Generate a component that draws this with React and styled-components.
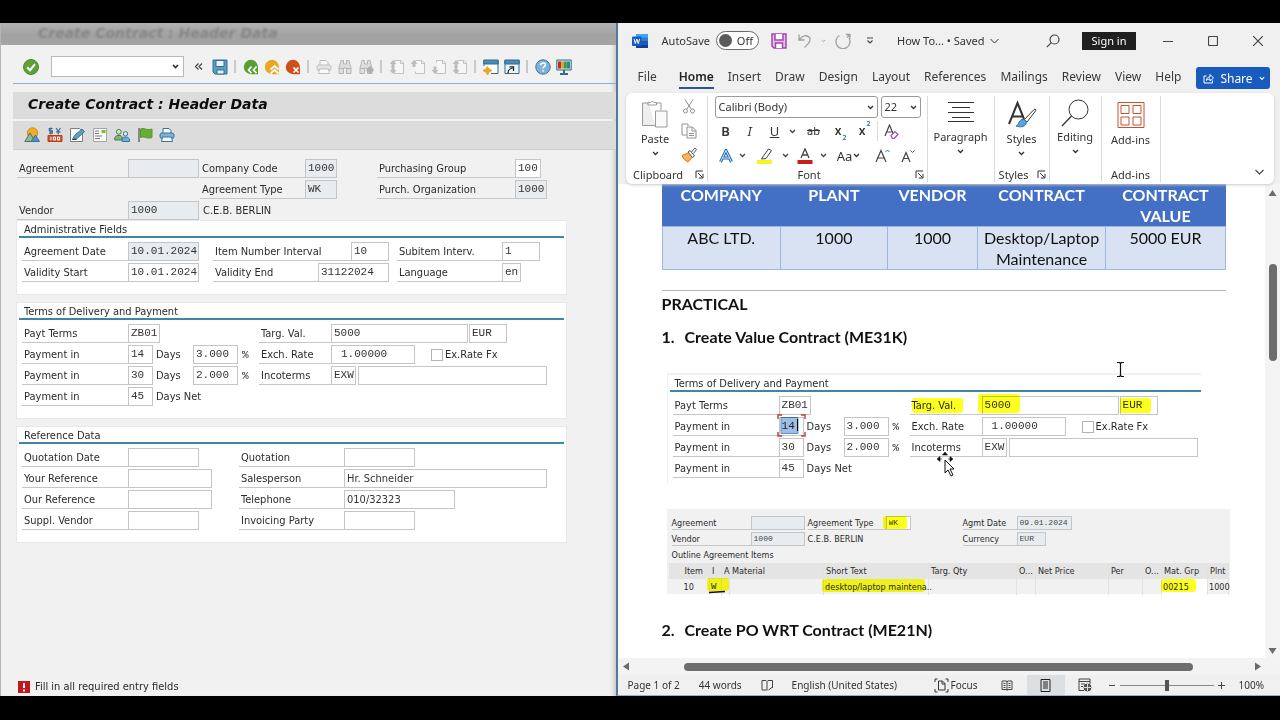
import React from "react";
import styled, { createGlobalStyle, css } from "styled-components";

const GlobalStyle = createGlobalStyle`
  * { box-sizing: border-box; }
  body { margin: 0; background: #000; }
  button, input, select { font: inherit; color: inherit; margin: 0; }
`;

const sapFont = `"DejaVu Sans Condensed", "DejaVu Sans", sans-serif`;
const sapTitleFont = `"DejaVu Sans", sans-serif`;
const monoFont = `"Liberation Mono", monospace`;
const officeFont = `"Noto Sans", "Open Sans", sans-serif`;
const docFont = `Lato, "Open Sans", sans-serif`;

const Screen = styled.div`
  min-height: 100vh;
  padding: 23px 0 24px;
  display: flex;
  background: #000;
`;

/* ---------- shared bits ---------- */

const IconButton = styled.button`
  width: ${(p) => p.$w || 21}px;
  height: ${(p) => p.$h || 21}px;
  flex: none;
  padding: 0;
  border: 0;
  background: ${(p) => p.$bg || "none"};
  display: flex;
  align-items: center;
  justify-content: center;
  color: ${(p) => p.$color || "#444"};
`;

const Svg = ({ w = 16, h, children, box }) => (
  <svg
    width={w}
    height={h || w}
    viewBox={box || `0 0 ${w} ${h || w}`}
    fill="none"
    stroke="currentColor"
    strokeWidth="1"
    aria-hidden="true"
  >
    {children}
  </svg>
);

const Chevron = ({ w = 7, stroke = 1.3 }) => (
  <Svg w={w} h={5} box="0 0 7 5">
    <path d="M1 1l2.500 2.500L6 1" strokeWidth={stroke} />
  </Svg>
);

/* ---------- SAP window ---------- */

const SapWindow = styled.section`
  flex: 616 1 0;
  min-width: 0;
  display: flex;
  flex-direction: column;
  background: #f1f1f1;
  border-left: 1px solid #b5b5b5;
  box-shadow: inset -5px 0 4px -3px #c4c4c4;
  font-family: ${sapFont};
  font-size: 11px;
  color: #2b2b2b;
`;

const GhostTitle = styled.div`
  height: 22px;
  padding-left: 37px;
  overflow: hidden;
  background: linear-gradient(#b2b2b2, #a2a2a2 55%, #a5a5a5);
  color: #868686;
  font-family: ${sapTitleFont};
  font-size: 14px;
  line-height: 21px;
  font-weight: bold;
  font-style: italic;
  > span { filter: blur(1px); }
`;

const SapToolbar = styled.div`
  height: 39px;
  margin-left: 12px;
  padding: 11px 0 0 7px;
  border-bottom: 1px solid #7db8cf;
  display: flex;
  align-items: flex-start;
`;

const Combo = styled.span`
  display: grid;
  align-items: center;
  flex: none;
  width: ${(p) => p.$w}px;
  margin: ${(p) => p.$margin || 0};
  > * { grid-area: 1 / 1; }
  > svg { justify-self: end; margin-right: 4px; pointer-events: none; }
`;

const Select = styled.select`
  appearance: none;
  width: 100%;
  height: ${(p) => p.$h || 22}px;
  padding: 0 3px 1px;
  border: 1px solid ${(p) => p.$line || "#9a9a9a"};
  border-radius: ${(p) => p.$radius || 0}px;
  background: #fff;
`;

const Sep = styled.span`
  width: 2px;
  height: 13px;
  margin: 4px 4px;
  background: #c9c9c9;
`;

const TitleStrip = styled.h1`
  margin: 8px 0 2px 12px;
  height: 27px;
  padding-left: 15px;
  background: #dcdcdc;
  color: #0c0c0c;
  font-family: ${sapTitleFont};
  font-size: 14px;
  line-height: 25px;
  font-weight: bold;
  font-style: italic;
`;

const AppToolbar = styled.div`
  margin-left: 12px;
  height: 29px;
  padding-left: 11px;
  background: #dcdcdc;
  border-bottom: 1px solid #d0d0d0;
`;

const AppTools = styled.div`
  width: 151px;
  height: 27px;
  display: flex;
  align-items: center;
  justify-content: space-between;
`;

const Form = styled.form`
  padding: 9px 16px 0;
  flex: 1;
`;

const Rows = styled.div`
  display: grid;
  gap: 2px;
`;

const Row = styled.div`
  display: flex;
  align-items: center;
  height: 19px;
`;

const Label = styled.label`
  flex: none;
  width: ${(p) => p.$w}px;
  height: 19px;
  margin-left: ${(p) => p.$gap || 0}px;
  padding-left: 2px;
  border-bottom: 1px solid #c6c6c6;
  line-height: 19px;
  white-space: nowrap;
`;

const Field = styled.input`
  flex: none;
  width: ${(p) => p.$w}px;
  height: 19px;
  margin-left: ${(p) => p.$gap || 0}px;
  padding: 0 0 1px ${(p) => (p.$indent ? 9 : 2)}px;
  border: 1px solid #c3c6c8;
  border-radius: 0;
  outline: 0;
  background: ${(p) => (p.readOnly ? "#e8ecef" : "#fff")};
  font-family: ${(p) => (p.$prose ? sapFont : monoFont)};
  font-size: 11px;
  color: #333;
`;

const Text = styled.span`
  flex: none;
  width: ${(p) => (p.$w ? `${p.$w}px` : "auto")};
  margin-left: ${(p) => p.$gap || 0}px;
  white-space: nowrap;
  font-family: ${(p) => (p.$mono ? monoFont : "inherit")};
`;

const Tick = styled.input`
  appearance: none;
  flex: none;
  width: 12px;
  height: 12px;
  margin: 0 2px 0 16px;
  border: 1px solid #b4b4b4;
  background: #fff;
`;

const Group = styled.fieldset`
  min-width: 0;
  max-width: 549px;
  margin: ${(p) => p.$top || 9}px 0 0;
  padding: 0 2px 12px;
  border: 0;
  background: #fff;
  box-shadow: 0 0 0 1px #e8e8e8;
`;

const GroupTitle = styled.h2`
  margin: 0 0 4px;
  height: 17px;
  padding-left: 5px;
  border-bottom: 2px solid #3f86a3;
  font-size: 11px;
  line-height: 17px;
  font-weight: normal;
`;

const GroupRows = styled(Rows)`
  padding-left: 3px;
`;

const SapStatus = styled.div`
  height: 19px;
  padding-left: 17px;
  display: flex;
  align-items: center;
  gap: 5px;
`;

const Entry = ({ id, label, lw, gap, w, value = "", ...rest }) => (
  <>
    <Label htmlFor={id} $w={lw} $gap={gap}>{label}</Label>
    <Field id={id} $w={w} defaultValue={value} {...rest} />
  </>
);

function TermsGroup({ prefix }) {
  return (
    <>
      <GroupTitle>Terms of Delivery and Payment</GroupTitle>
      <GroupRows>
        <Row>
          <Entry id={`${prefix}terms`} label="Payt Terms" lw={106} w={32} value="ZB01" />
          <Entry id={`${prefix}targ`} label="Targ. Val." lw={72} gap={99} w={137} value="5000" />
          <Field $w={38} $gap={1} aria-label="Currency" defaultValue="EUR" />
        </Row>
        <Row>
          <Entry id={`${prefix}p1`} label="Payment in" lw={106} w={25} value="14" />
          <Text $w={37} $gap={3}>Days</Text>
          <Field $w={45} aria-label="Discount 1" defaultValue="3.000" />
          <Text $mono $w={17} $gap={4}>%</Text>
          <Entry id={`${prefix}rate`} label="Exch. Rate" lw={72} w={84} value="1.00000" $indent />
          <Tick type="checkbox" id={`${prefix}fx`} />
          <label htmlFor={`${prefix}fx`}>Ex.Rate Fx</label>
        </Row>
        <Row>
          <Entry id={`${prefix}p2`} label="Payment in" lw={106} w={25} value="30" />
          <Text $w={37} $gap={3}>Days</Text>
          <Field $w={45} aria-label="Discount 2" defaultValue="2.000" />
          <Text $mono $w={17} $gap={4}>%</Text>
          <Entry id={`${prefix}inco`} label="Incoterms" lw={72} w={25} value="EXW" />
          <Field $w={189} $gap={2} aria-label="Incoterms place" />
        </Row>
        <Row>
          <Entry id={`${prefix}p3`} label="Payment in" lw={106} w={25} value="45" />
          <Text $gap={3}>Days Net</Text>
        </Row>
      </GroupRows>
    </>
  );
}

/* SAP icons */
const CheckIcon = () => (
  <Svg>
    <circle cx="8" cy="8" r="7.500" fill="#5ea03a" stroke="#4c8a2c" />
    <path d="M4.200 8.200l2.800 3 5-6" stroke="#fff" strokeWidth="2" />
  </Svg>
);
const SapSave = () => (
  <Svg>
    <path d="M1 1h14v14H3l-2-2z" fill="#5c9cc2" stroke="#2e6f96" />
    <path d="M4 1.500h8v6H4z" fill="#e9f3f8" stroke="#2e6f96" />
    <path d="M5 11h7v4H5z" fill="#e9f3f8" stroke="#2e6f96" />
  </Svg>
);
const NavIcon = ({ color, d }) => (
  <Svg>
    <path d="M8 .8a7.200 7.200 0 1 0 0 14.400h7V8A7.200 7.200 0 0 0 8 .8z" fill={color} stroke="none" />
    <path d={d} stroke="#fff" strokeWidth="1.700" />
  </Svg>
);
const Printer = ({ line = "#bdbdbd", fill = "#e3e3e3" }) => (
  <Svg>
    <path d="M4 6V1.500h6l2 2V6" fill="#fafafa" stroke={line} />
    <rect x="1" y="6" width="14" height="5.500" rx="2" fill={fill} stroke={line} />
    <path d="M3.500 10h9l1 4.500h-11z" fill="#fafafa" stroke={line} />
  </Svg>
);
const Binoculars = ({ plus }) => (
  <Svg>
    <path d="M4 1.500h2.500V5h3V1.500H12L14 9v5.500H9.500V9h-3v5.500H2V9z" fill="#dedede" stroke="#b5b5b5" />
    <path d="M2 9.500h4.500M9.500 9.500H14" stroke="#b5b5b5" />
    {plus && <path d="M12 7.500v7M8.500 11h7" stroke="#adadad" strokeWidth="3" />}
  </Svg>
);
const PageIcon = ({ up, down }) => (
  <Svg>
    <path d="M5.500 3.500v-2H12L14.500 4v10.500h-9v-2" fill="#f6f6f6" stroke="#c2c2c2" />
    <path d="M11.500 1.500v3h3" stroke="#c2c2c2" />
    {up && <path d="M4 1L.5 5h2v3h3V5h2z" fill="#bdbdbd" stroke="none" />}
    {down && <path d="M4 15L.5 11h2V7.500h3V11h2z" fill="#bdbdbd" stroke="none" />}
  </Svg>
);
const NewSession = () => (
  <Svg>
    <path d="M1 7V1.500h14V14.500H8" fill="#fff" stroke="#2f6b90" />
    <path d="M.8 1h14.400v4H.8z" fill="#4b8cb3" stroke="#2f6b90" />
    <path d="M4.500 7.500L6 10l3 1.500L6 13l-1.500 3L3 13 0 11.500 3 10z" fill="#e9a81f" stroke="#e9a81f" />
  </Svg>
);
const Shortcut = () => (
  <Svg>
    <path d="M1 1.500h14v13H1z" fill="#eef4f8" stroke="#2f6b90" />
    <path d="M.8 1h14.400v4H.8z" fill="#4b8cb3" stroke="#2f6b90" />
    <path d="M4 14c0-3 1-4 4.500-5M5.500 7.800h4V12" stroke="#222" strokeWidth="1.300" />
  </Svg>
);
const HelpIcon = () => (
  <Svg>
    <circle cx="8" cy="8" r="7.200" fill="#7fb2d3" stroke="#33759f" />
    <path d="M5.600 6.300c.1-3.200 5-3 4.800-.3C10.200 7.700 8 7.600 8 9.600M8 11v1.600" stroke="#fff" strokeWidth="1.600" />
  </Svg>
);
const Monitor = () => (
  <Svg>
    <path d="M.8 1h14.400v10H.8z" fill="#d5e6f0" stroke="#2f6b90" />
    <path d="M2 2.500h3.200v7H2z" fill="#c62a22" stroke="none" />
    <path d="M5.200 2.500h2.400v7H5.200z" fill="#e8a41d" stroke="none" />
    <path d="M7.600 2.500h3v7h-3z" fill="#4b9b38" stroke="none" />
    <path d="M10.600 2.500H14v7h-3.400z" fill="#2d8b86" stroke="none" />
    <path d="M8 11v3M4 15h8" stroke="#2f6b90" strokeWidth="2" />
  </Svg>
);
const Overview = () => (
  <Svg>
    <circle cx="8.500" cy="6" r="5.200" fill="#f3ac26" stroke="#d78e12" />
    <path d="M.8 14.500L6 6l5 8.500z" fill="#8fbf8e" stroke="#567" />
    <path d="M7 14.500L11.500 8l4 6.500z" fill="#4e96bf" stroke="#33759f" />
  </Svg>
);
const Conditions = () => (
  <Svg>
    <path d="M5.500 1.500H2.300v2.300h3v2.400H2M3.800.5v7M9 1l2.200 3L13.500 1M11.200 4v3.500M9 4.800h4.500" stroke="#326f96" strokeWidth="1.200" />
    <path d="M1 8.500h14v6H1z" fill="#d4532c" stroke="#b5401d" />
    <path d="M4 9.800v3.400M6.500 10h2v3h-2zM10.500 10h2v3h-2z" stroke="#fff" />
  </Svg>
);
const EditDoc = () => (
  <Svg>
    <path d="M1.500 1.500h9l3 3v10h-12z" fill="#fbfbfb" stroke="#7e7e7e" />
    <path d="M3.500 12.500l2-4L13 2l2.500 2.500L8 11.500z" fill="#5e9fc6" stroke="#33759f" />
    <path d="M3.500 12.500h4" stroke="#333" />
  </Svg>
);
const TextDoc = () => (
  <Svg>
    <path d="M1.500 1.500h13v13h-13z" fill="#fbfbfb" stroke="#a5a5a5" />
    <path d="M9.500 3h4v3h-4z" fill="#8bb92e" stroke="none" />
    <path d="M3 4h4M3 6.500h4M3 9h7M3 11.500h5" stroke="#777" />
  </Svg>
);
const Partners = () => (
  <Svg>
    <circle cx="4.800" cy="4.800" r="2.400" fill="#d7e8cf" stroke="#4c7d46" />
    <path d="M.8 13v-2.500l2-2h4l1.400 1.500v3z" fill="#86b478" stroke="#4c7d46" />
    <circle cx="11.500" cy="6.800" r="2.200" fill="#d8e8f2" stroke="#33759f" />
    <path d="M8 14.500V12l1.500-1.800h4l2 1.800v2.500z" fill="#77aacb" stroke="#33759f" />
  </Svg>
);
const FlagIcon = () => (
  <Svg>
    <path d="M2 1v14" stroke="#6d6d6d" strokeWidth="1.500" />
    <path d="M3.500 2c4-2 5 2 11.500 0v8.500c-6 2-7.500-2-11.500 0z" fill="#66ad35" stroke="#569a2a" />
  </Svg>
);

function SapPanel() {
  return (
    <SapWindow>
      <GhostTitle aria-hidden="true"><span>Create Contract : Header Data</span></GhostTitle>
      <SapToolbar>
        <IconButton aria-label="Enter"><CheckIcon /></IconButton>
        <Combo $w={133} $margin="0 4px 0 10px">
          <Select $h={21} $line="#b9b9b9" aria-label="Command"><option></option></Select>
          <Chevron w={9} stroke={1.6} />
        </Combo>
        <IconButton aria-label="Hide command field">
          <Svg w={9} h={9}><path d="M4.500 1.500l-3 3 3 3M8 1.500l-3 3 3 3" strokeWidth="1.200" /></Svg>
        </IconButton>
        <IconButton aria-label="Save"><SapSave /></IconButton>
        <Sep />
        <IconButton aria-label="Back"><NavIcon color="#55a02f" d="M8.500 7.500L5.500 11l3 3.200M13.500 7.500l-3 3.500 3 3.200" /></IconButton>
        <IconButton aria-label="Exit"><NavIcon color="#eba624" d="M6.500 10.500l4-3.500 4 3.500M6.500 14.500l4-3.500 4 3.500" /></IconButton>
        <IconButton aria-label="Cancel"><NavIcon color="#cf4f1c" d="M8.500 8.500l5 5M13.500 8.500l-5 5" /></IconButton>
        <Sep />
        <IconButton aria-label="Print"><Printer /></IconButton>
        <IconButton aria-label="Find"><Binoculars /></IconButton>
        <IconButton aria-label="Find next"><Binoculars plus /></IconButton>
        <Sep />
        <IconButton aria-label="First page"><PageIcon up down /></IconButton>
        <IconButton aria-label="Previous page"><PageIcon up /></IconButton>
        <IconButton aria-label="Next page"><PageIcon down /></IconButton>
        <IconButton aria-label="Last page"><PageIcon up down /></IconButton>
        <Sep />
        <IconButton aria-label="New session"><NewSession /></IconButton>
        <IconButton aria-label="Create shortcut"><Shortcut /></IconButton>
        <Sep />
        <IconButton aria-label="Help"><HelpIcon /></IconButton>
        <IconButton aria-label="Layout"><Monitor /></IconButton>
      </SapToolbar>
      <TitleStrip>Create Contract : Header Data</TitleStrip>
      <AppToolbar>
        <AppTools>
          <IconButton $w={16} aria-label="Overview"><Overview /></IconButton>
          <IconButton $w={16} aria-label="Conditions"><Conditions /></IconButton>
          <IconButton $w={16} aria-label="Edit"><EditDoc /></IconButton>
          <IconButton $w={16} aria-label="Texts"><TextDoc /></IconButton>
          <IconButton $w={16} aria-label="Partners"><Partners /></IconButton>
          <IconButton $w={16} aria-label="Release"><FlagIcon /></IconButton>
          <IconButton $w={16} aria-label="Print"><Printer line="#33759f" fill="#7fb2d3" /></IconButton>
        </AppTools>
      </AppToolbar>
      <Form>
        <Rows>
          <Row>
            <Entry id="agreement" label="Agreement" lw={111} w={71} readOnly />
            <Entry id="company" label="Company Code" lw={105} gap={1} w={32} value="1000" readOnly />
            <Entry id="pgroup" label="Purchasing Group" lw={138} gap={40} w={26} value="100" />
          </Row>
          <Row>
            <Entry id="atype" label="Agreement Type" lw={105} gap={183} w={32} value="WK" readOnly />
            <Entry id="porg" label="Purch. Organization" lw={138} gap={40} w={32} value="1000" readOnly />
          </Row>
          <Row>
            <Entry id="vendor" label="Vendor" lw={111} w={71} value="1000" readOnly />
            <Text $gap={4}>C.E.B. BERLIN</Text>
          </Row>
        </Rows>
        <Group $top={1}>
          <GroupTitle>Administrative Fields</GroupTitle>
          <GroupRows>
            <Row>
              <Entry id="adate" label="Agreement Date" lw={106} w={71} value="10.01.2024" readOnly />
              <Entry id="interval" label="Item Number Interval" lw={138} gap={14} w={38} value="10" />
              <Entry id="subitem" label="Subitem Interv." lw={105} gap={8} w={38} value="1" />
            </Row>
            <Row>
              <Entry id="vstart" label="Validity Start" lw={106} w={71} value="10.01.2024" />
              <Entry id="vend" label="Validity End" lw={105} gap={14} w={71} value="31122024" />
              <Entry id="lang" label="Language" lw={105} gap={8} w={19} value="en" />
            </Row>
          </GroupRows>
        </Group>
        <Group>
          <TermsGroup prefix="t-" />
        </Group>
        <Group>
          <GroupTitle>Reference Data</GroupTitle>
          <GroupRows>
            <Row>
              <Entry id="qdate" label="Quotation Date" lw={106} w={71} />
              <Entry id="quot" label="Quotation" lw={105} gap={40} w={71} />
            </Row>
            <Row>
              <Entry id="yref" label="Your Reference" lw={106} w={84} />
              <Entry id="sales" label="Salesperson" lw={105} gap={27} w={203} value="Hr. Schneider" $prose />
            </Row>
            <Row>
              <Entry id="oref" label="Our Reference" lw={106} w={84} />
              <Entry id="tel" label="Telephone" lw={105} gap={27} w={111} value="010/32323" $prose />
            </Row>
            <Row>
              <Entry id="supp" label="Suppl. Vendor" lw={106} w={71} />
              <Entry id="inv" label="Invoicing Party" lw={105} gap={40} w={71} />
            </Row>
          </GroupRows>
        </Group>
      </Form>
      <SapStatus>
        <Svg w={12}>
          <rect x="0" y="0" width="12" height="12" fill="#c5161d" stroke="none" />
          <path d="M6 2v5M6 8.500v2" stroke="#fff" strokeWidth="2" />
        </Svg>
        Fill in all required entry fields
      </SapStatus>
    </SapWindow>
  );
}

/* ---------- Word window ---------- */

const WordWindow = styled.section`
  flex: 664 1 0;
  min-width: 0;
  display: flex;
  flex-direction: column;
  background: #f0f0f0;
  border-left: 2px solid #54799d;
  border-bottom: 1px solid #8fb4cc;
  font-family: ${officeFont};
  font-size: 11px;
  color: #333;
`;

const TitleBar = styled.header`
  height: 35px;
  padding-left: 14px;
  display: flex;
  align-items: center;
`;

const Toggle = styled.button`
  width: 43px;
  height: 19px;
  margin: 0 9px 0 6px;
  padding: 0 5px 0 2px;
  flex: none;
  display: flex;
  align-items: center;
  justify-content: space-between;
  border: 1px solid #6c6c6c;
  border-radius: 10px;
  background: #fff;
  line-height: 16px;
  &::before {
    content: "";
    width: 13px;
    height: 13px;
    border-radius: 50%;
    background: #5b5b5b;
  }
`;

const Name = styled.span`
  white-space: nowrap;
  margin-left: ${(p) => p.$gap || 0}px;
  margin-right: ${(p) => p.$after || 0}px;
`;

const SignIn = styled.button`
  width: 54px;
  height: 18px;
  margin: 0 10px 0 19px;
  padding: 0;
  border: 0;
  background: #1f1f1f;
  color: #fff;
  line-height: 16px;
`;

const Stretch = styled.span`
  flex: 1;
`;

const Tabs = styled.nav`
  height: 35px;
  padding: 5px 10px 0 20px;
  display: flex;
  align-items: center;
  gap: 14px;
  font-size: 12px;
`;

const Tab = styled.a`
  height: 22px;
  line-height: 20px;
  color: #3a3a3a;
  text-decoration: none;
  white-space: nowrap;
  border-bottom: 2px solid transparent;
  ${(p) => p.$first && css`margin-right: 8px;`}
  ${(p) =>
    p.$on &&
    css`
      font-weight: 600;
      color: #222;
      border-color: #2b579a;
    `}
`;

const Share = styled.button`
  width: 74px;
  height: 22px;
  margin-left: auto;
  flex: none;
  padding: 0 5px 0 7px;
  border: 0;
  border-radius: 3px;
  background: #185abd;
  color: #fff;
  display: flex;
  align-items: center;
  justify-content: space-between;
`;

const Ribbon = styled.div`
  height: 91px;
  margin: 0 6px 0 8px;
  display: flex;
  background: #fff;
  border-radius: 6px;
  box-shadow: 0 1px 3px #c8c8c8;
  z-index: 1;
`;

const RGroup = styled.div`
  width: ${(p) => p.$w}px;
  margin: 3px 0 2px;
  flex: none;
  border-right: 1px solid #dadada;
  display: flex;
  flex-direction: column;
`;

const RBody = styled.div`
  flex: 1;
  padding-left: ${(p) => p.$shift || 0}px;
  display: flex;
  justify-content: center;
`;

const RFoot = styled.div`
  height: 15px;
  display: flex;
  align-items: center;
  line-height: 15px;
  white-space: nowrap;
  > span { flex: 1; text-align: center; }
  > svg { margin: 0 3px 0 4px; }
`;

const Big = styled.button`
  padding: 0;
  border: 0;
  background: none;
  display: flex;
  flex-direction: column;
  align-items: center;
  line-height: 16px;
  > svg:first-child { margin: 3px 0 2px; }
  > svg:last-child { margin-top: 4px; }
`;

const ClipColumn = styled.div`
  display: flex;
  flex-direction: column;
  margin-left: 9px;
  gap: 3px;
`;

const FontBody = styled.div`
  flex: 1;
  padding: 0 7px;
`;

const FontRow = styled.div`
  display: flex;
  align-items: center;
  height: ${(p) => p.$h || 24}px;
`;

const Glyph = styled.button`
  width: ${(p) => p.$w || 28}px;
  height: 22px;
  flex: none;
  padding: 0;
  border: 0;
  background: none;
  font-size: ${(p) => p.$size || 13}px;
  line-height: 20px;
  font-weight: ${(p) => (p.$bold ? 600 : 400)};
  font-style: ${(p) => (p.$italic ? "italic" : "normal")};
  text-decoration: ${(p) => p.$line || "none"};
  display: flex;
  align-items: center;
  justify-content: center;
  gap: 1px;
  sub, sup { font-size: 7px; color: #2b6fb3; line-height: 8px; }
  sub { align-self: flex-end; }
  sup { align-self: flex-start; }
`;

const Divider = styled.span`
  width: 1px;
  height: 20px;
  margin-left: ${(p) => p.$gap || 0}px;
  background: #dadada;
`;

const Collapse = styled(IconButton)`
  margin: auto 4px 2px auto;
`;

const Work = styled.div`
  flex: 1;
  display: flex;
`;

const Page = styled.article`
  flex: 1;
  min-width: 0;
  position: relative;
  padding: 0 39px 0 44px;
  background: #fff;
  color: #111;
  font-family: ${docFont};
`;

const ContractTable = styled.table`
  width: 100%;
  border-collapse: collapse;
  table-layout: fixed;
  font-size: 16px;
  line-height: 21px;
  text-align: center;
  th {
    padding: 0;
    height: 42px;
    background: #4370c4;
    color: #fff;
    font-weight: 700;
    vertical-align: top;
  }
  td {
    padding: 0;
    height: 43px;
    background: #d9e2f3;
    border: 1px solid #9db7e0;
    vertical-align: top;
  }
`;

const Rule = styled.hr`
  height: 1px;
  margin: 20px 0 2px;
  border: 0;
  background: #b4b4b4;
`;

const Heading = styled.h2`
  margin: 0;
  height: 33px;
  font-size: 16px;
  line-height: 22px;
  font-weight: 700;
`;

const Steps = styled.ol`
  list-style: none;
  margin: 0;
  padding: 0;
`;

const StepTitle = styled.h3`
  margin: 0;
  padding-top: ${(p) => p.$top || 0}px;
  display: flex;
  font-size: 16px;
  line-height: 22px;
  font-weight: 700;
  &::before {
    content: "${(p) => p.$n}.";
    width: 23px;
  }
`;

const Shot = styled.figure`
  position: relative;
  margin: 25px -4px 0 5px;
  font-family: ${sapFont};
  color: #2b2b2b;
`;

const TermsShot = styled(Shot)`
  margin-right: 25px;
  height: 110px;
  border-top: 2px solid #f1f1f1;
  border-left: 1px solid #f0f0f0;
  font-size: 11px;
  padding-left: 2px;
`;

const ItemsShot = styled(Shot)`
  margin-top: 26px;
  height: 85px;
  padding: 6px 0 0 5px;
  background: #f1f1f1;
  font-size: 9px;
`;

/* felt-pen strokes over the pasted screens */
const Marker = styled.span`
  position: absolute;
  left: ${(p) => p.$x}px;
  top: ${(p) => p.$y}px;
  width: ${(p) => p.$w}px;
  height: ${(p) => p.$h}px;
  border-radius: 3px;
  background: #fdff1f;
  mix-blend-mode: multiply;
`;

/* selected text and the red corners of the active field */
const Focused = styled.span`
  position: absolute;
  left: 109px;
  top: 39px;
  line-height: 0;
  mix-blend-mode: multiply;
`;

const SmallRow = styled.div`
  display: flex;
  height: 16px;
  align-items: center;
`;

const SmallLabel = styled(Label)`
  height: 14px;
  line-height: 14px;
  padding-left: 0;
`;

const SmallField = styled(Field)`
  height: 14px;
  font-size: 8px;
  color: #444;
`;

const ItemsTable = styled.table`
  width: 560px;
  margin-left: -3px;
  border-collapse: collapse;
  table-layout: fixed;
  line-height: 13px;
  th, td {
    height: 16px;
    padding: 0 0 0 2px;
    font-weight: normal;
    text-align: left;
    white-space: nowrap;
    border-right: 1px solid #e2e2e2;
  }
  th { background: #e4e4e4; }
`;

const Pointer = styled.span`
  position: absolute;
  left: ${(p) => p.$x}px;
  top: ${(p) => p.$y}px;
  color: #111;
  line-height: 0;
`;

const VScroll = styled.div`
  width: 15px;
  background: #f4f4f4;
  display: flex;
  flex-direction: column;
  align-items: center;
  padding: 5px 0 3px;
  color: #6b6b6b;
`;

const VThumb = styled.div`
  width: 8px;
  height: 97px;
  margin: 66px 0 auto;
  border-radius: 4px;
  background: #6d6d6d;
`;

const HScroll = styled.div`
  height: 17px;
  padding: 0 18px 0 4px;
  display: flex;
  align-items: center;
  color: #6b6b6b;
  background: #f3f3f3;
`;

const HThumb = styled.div`
  flex: 1;
  height: 8px;
  margin: 0 60px 0 53px;
  border-radius: 4px;
  background: #6d6d6d;
`;

const StatusBar = styled.footer`
  height: 20px;
  padding: 0 16px 0 10px;
  display: flex;
  align-items: center;
  font-size: 10px;
  white-space: nowrap;
`;

const Zoom = styled.input`
  appearance: none;
  width: 94px;
  height: 12px;
  background: linear-gradient(#888, #888) center / 100% 1px no-repeat;
  &::-webkit-slider-thumb {
    appearance: none;
    width: 4px;
    height: 11px;
    background: #555;
  }
`;

const Arrow = ({ d }) => (
  <Svg w={9} h={9}><path d={d} fill="currentColor" stroke="none" /></Svg>
);

const Launcher = () => (
  <Svg w={9}>
    <path d="M1 8V1h7M3 3l4.500 4.500M8 3.800V8H3.800" />
  </Svg>
);

const tabs = ["File", "Home", "Insert", "Draw", "Design", "Layout", "References", "Mailings", "Review", "View", "Help"];

function WordTitle() {
  return (
    <TitleBar>
      <Svg w={16}>
        <path d="M4 1h12v14H4z" fill="#41a5ee" stroke="none" />
        <path d="M4 4.500h12v3.500H4z" fill="#2b7cd3" stroke="none" />
        <path d="M4 8h12v3.500H4z" fill="#185abd" stroke="none" />
        <path d="M4 11.500h12V15H4z" fill="#103f91" stroke="none" />
        <rect x="0" y="3.500" width="9.500" height="9.500" rx="1" fill="#185abd" stroke="none" />
        <path d="M2 5.800l1.300 4.800 1.500-4.600 1.500 4.600 1.300-4.800" stroke="#fff" />
      </Svg>
      <Name $gap={14}>AutoSave</Name>
      <Toggle aria-label="AutoSave">Off</Toggle>
      <IconButton $color="#a348ad" aria-label="Save">
        <Svg>
          <path d="M1 1h14v14H3l-2-2z" fill="#e3bfe8" strokeWidth="1.500" />
          <path d="M4 1v6h8V1M4.500 15v-5h7v5" fill="#fff" strokeWidth="1.500" />
        </Svg>
      </IconButton>
      <IconButton $w={32} $color="#a0a0a0" aria-label="Undo">
        <Svg><path d="M2 1.500v5.500h5.500M2.300 6.800C5 2.500 10 1.500 12.500 4.500c2.300 3-1 6-5 10" strokeWidth="1.300" /></Svg>
      </IconButton>
      <Svg w={5} h={4} box="0 0 7 5"><path d="M1 1l2.500 2.500L6 1" stroke="#a0a0a0" strokeWidth="1.300" /></Svg>
      <IconButton $w={34} $color="#a0a0a0" aria-label="Redo">
        <Svg><path d="M11 1.500h4v4M14.500 2L12 4.500M4.500 2.500A7 7 0 1 0 14 5" strokeWidth="1.300" /></Svg>
      </IconButton>
      <IconButton $w={20} aria-label="Customize">
        <Svg w={8} h={7}><path d="M1 1h6M1.500 3.500L4 6l2.500-2.500" strokeWidth="1.200" /></Svg>
      </IconButton>
      <Name $gap={17} $after={5}>How To... • Saved</Name>
      <Svg w={9} h={6}><path d="M.5 1l4 4 4-4" /></Svg>
      <Stretch />
      <IconButton aria-label="Search">
        <Svg w={14}><circle cx="8.500" cy="5.500" r="4.500" strokeWidth="1.200" /><path d="M5.300 8.700L.8 13.200" strokeWidth="1.200" /></Svg>
      </IconButton>
      <SignIn>Sign in</SignIn>
      <IconButton $w={44} aria-label="Minimize"><Svg w={10}><path d="M0 5.500h10" /></Svg></IconButton>
      <IconButton $w={46} aria-label="Maximize"><Svg w={10}><rect x=".5" y=".5" width="9" height="9" rx="1" strokeWidth="1.200" /></Svg></IconButton>
      <IconButton $w={44} aria-label="Close"><Svg w={10}><path d="M0 0l10 10M10 0L0 10" strokeWidth="1.200" /></Svg></IconButton>
    </TitleBar>
  );
}

function WordRibbon() {
  return (
    <Ribbon>
      <RGroup $w={82}>
        <RBody $shift={8}>
          <Big>
            <Svg w={28} h={30}>
              <path d="M8 4H1.500v22.500H14" fill="#eee" stroke="#9a9a9a" />
              <path d="M20 11V4h-6" stroke="#9a9a9a" />
              <path d="M7 6V3.500h2.500a2 2 0 0 1 3.500 0h2.500V6z" fill="#fff" stroke="#9a9a9a" />
              <path d="M14.500 12h11.500v16H14.500z" fill="#fafafa" stroke="#9a9a9a" />
            </Svg>
            Paste
            <Chevron />
          </Big>
          <ClipColumn>
            <IconButton aria-label="Cut" $color="#909090">
              <Svg w={12} h={15}><path d="M2 .5l6.500 10M10 .5L3.500 10.500" /><circle cx="2.500" cy="12" r="2" /><circle cx="9.500" cy="12" r="2" /></Svg>
            </IconButton>
            <IconButton aria-label="Copy" $color="#909090">
              <Svg w={16}><path d="M5.500 12H1V1h6v2M6 4h5.500L15 7.500V15H6zM11 4v4h4M8 10.500h5M8 12.500h5" /></Svg>
            </IconButton>
            <IconButton aria-label="Format painter">
              <Svg>
                <path d="M1 8.500l7-3 3.500 4.500-4.500 5C4 13.500 2 11.500 1 8.500z" fill="#f6b55c" stroke="#d57f26" />
                <path d="M7 5l2-1.500L13.500 9l-2 1.500z" fill="#fff" stroke="#555" />
                <path d="M10.500 5L14 1l1.500 1.500-3 4" fill="#fff" stroke="#555" />
              </Svg>
            </IconButton>
          </ClipColumn>
        </RBody>
        <RFoot><span>Clipboard</span><Launcher /></RFoot>
      </RGroup>
      <RGroup $w={220}>
        <FontBody>
          <FontRow $h={22}>
            <Combo $w={163} $margin="0 3px 0 0">
              <Select aria-label="Font" $radius={3}><option>Calibri (Body)</option></Select>
              <Chevron />
            </Combo>
            <Combo $w={40}>
              <Select aria-label="Font size" $radius={3}><option>22</option></Select>
              <Chevron />
            </Combo>
          </FontRow>
          <FontRow $h={26}>
            <Glyph $w={22} $bold aria-label="Bold">B</Glyph>
            <Glyph $w={26} $italic aria-label="Italic">I</Glyph>
            <Glyph $w={24} $line="underline" aria-label="Underline">U</Glyph>
            <IconButton $w={12} aria-label="Underline style"><Chevron /></IconButton>
            <Glyph $w={30} $size={11} $line="line-through" aria-label="Strikethrough">ab</Glyph>
            <Glyph $w={24} $size={12} $bold aria-label="Subscript">x<sub>2</sub></Glyph>
            <Glyph $w={24} $size={12} $bold aria-label="Superscript">x<sup>2</sup></Glyph>
            <Divider />
            <IconButton $w={28} aria-label="Clear formatting">
              <Svg w={15} h={15}>
                <path d="M1 12L5.500 1 9 9.500M2.500 8h5" strokeWidth="1.200" />
                <path d="M7 11.500l4-4 3 3-4 4H8.500z" fill="#fff" stroke="#a348ad" strokeWidth="1.200" />
              </Svg>
            </IconButton>
          </FontRow>
          <FontRow $h={23}>
            <IconButton $w={22} aria-label="Text effects">
              <Svg w={14}><path d="M1.500 13L7 1.500 12.500 13M3.800 9h6.400" stroke="#2b6fb3" strokeWidth="3" /><path d="M1.500 13L7 1.500 12.500 13M3.800 9h6.400" stroke="#cfe3f5" /></Svg>
            </IconButton>
            <IconButton $w={12} aria-label="Effects menu"><Chevron /></IconButton>
            <IconButton $w={32} aria-label="Highlight">
              <Svg w={16}>
                <path d="M5 10L11.500 1l3 1.500L9 10.500 4.500 11z" />
                <path d="M0 12h15v4H0z" fill="#f6f61e" stroke="none" />
              </Svg>
            </IconButton>
            <IconButton $w={10} aria-label="Highlight colour"><Chevron /></IconButton>
            <IconButton $w={28} aria-label="Font colour">
              <Svg w={16}>
                <path d="M4 10L8 .8 12 10M5.500 7h5" strokeWidth="1.300" />
                <path d="M.5 12h15v4H.5z" fill="#c81e1e" stroke="none" />
              </Svg>
            </IconButton>
            <IconButton $w={10} aria-label="Font colour menu"><Chevron /></IconButton>
            <Glyph $w={40} aria-label="Change case">Aa<Chevron /></Glyph>
            <Divider $gap={1} />
            <IconButton $w={26} aria-label="Grow font">
              <Svg w={16}><path d="M1 14L6 2.500 11 14M2.800 10h6.400" strokeWidth="1.200" /><path d="M10.500 4l2-2 2 2" stroke="#2b6fb3" /></Svg>
            </IconButton>
            <IconButton $w={24} aria-label="Shrink font">
              <Svg w={16}><path d="M2 14L6 4.500 10 14M3.500 10.500h5" strokeWidth="1.200" /><path d="M10.500 2.500l2 2 2-2" stroke="#2b6fb3" /></Svg>
            </IconButton>
          </FontRow>
        </FontBody>
        <RFoot><span>Font</span><Launcher /></RFoot>
      </RGroup>
      <RGroup $w={67}>
        <RBody>
          <Big>
            <Svg w={28} h={28}><path d="M1 3.500h26M5 8.500h18M1 13.500h26M5 18.500h18M1 22.500h26" strokeWidth="1.200" /></Svg>
            Paragraph
            <Chevron />
          </Big>
        </RBody>
      </RGroup>
      <RGroup $w={55}>
        <RBody>
          <Big>
            <Svg w={30} h={30}>
              <path d="M2 25L10.500 4 17 20M5 17.500h11" strokeWidth="2" />
              <path d="M17 21L27 10.500c1.500-1 2.500.5 1.500 1.500L20 23z" fill="#fff" />
              <path d="M9 27c3-.5 2-5 6-6.500 3-.5 5 2 4 4.500-1.500 3-6 3.500-10 2z" fill="#5ba5dc" stroke="#2b6fb3" />
            </Svg>
            Styles
            <Chevron />
          </Big>
        </RBody>
        <RFoot><span>Styles</span><Launcher /></RFoot>
      </RGroup>
      <RGroup $w={52}>
        <RBody>
          <Big>
            <Svg w={28} h={28}><circle cx="17.500" cy="10.500" r="9.500" /><path d="M10.500 17L1 27" strokeWidth="1.300" /></Svg>
            Editing
            <Chevron />
          </Big>
        </RBody>
      </RGroup>
      <RGroup $w={59}>
        <RBody>
          <Big>
            <Svg w={28} h={30}>
              <g stroke="#c8502d">
                <path d="M1 2.500h26v25H1z" />
                <path d="M4 5.500h8v8H4zM16 5.500h8v8h-8zM4 17h8v8H4zM16 17h8v8h-8z" />
              </g>
            </Svg>
            Add-ins
          </Big>
        </RBody>
        <RFoot><span>Add-ins</span></RFoot>
      </RGroup>
      <Collapse aria-label="Collapse ribbon"><Svg w={9} h={6}><path d="M.5 1l4 4 4-4" strokeWidth="1.200" /></Svg></Collapse>
    </Ribbon>
  );
}

const itemCols = [41, 12, 8, 94, 105, 88, 19, 73, 34, 19, 46, 21];
const itemHeads = ["Item", "I", "A", "Material", "Short Text", "Targ. Qty", "O...", "Net Price", "Per", "O...", "Mat. Grp", "Plnt"];
const itemCells = ["10", "W", "", "", "desktop/laptop maintena..", "", "", "", "", "", "00215", "1000"];

const ItemHead = styled.th`
  && { padding-left: ${(p) => (p.$first ? 16 : 2)}px; }
`;
const ItemCell = styled.td`
  && {
    padding-left: ${(p) => (p.$first ? 15 : 1)}px;
    background: ${(p) => (p.$white ? "#fff" : "none")};
    font-family: ${(p) => (p.$mono ? monoFont : "inherit")};
  }
`;

function WordDocument() {
  return (
    <Page>
      <ContractTable>
        <colgroup>
          <col style={{ width: "21%" }} />
          <col style={{ width: "19%" }} />
          <col style={{ width: "16%" }} />
          <col />
          <col style={{ width: "21.3%" }} />
        </colgroup>
        <thead>
          <tr><th>COMPANY</th><th>PLANT</th><th>VENDOR</th><th>CONTRACT</th><th>CONTRACT<br />VALUE</th></tr>
        </thead>
        <tbody>
          <tr><td>ABC LTD.</td><td>1000</td><td>1000</td><td>Desktop/Laptop<br />Maintenance</td><td>5000 EUR</td></tr>
        </tbody>
      </ContractTable>
      <Rule />
      <Heading>PRACTICAL</Heading>
      <Steps>
        <li>
          <StepTitle $n={1}>Create Value Contract (ME31K)</StepTitle>
          <TermsShot>
            <TermsGroup prefix="w-" />
            <Marker $x={244} $y={23} $w={51} $h={15} />
            <Marker $x={310} $y={19} $w={42} $h={19} />
            <Marker $x={452} $y={23} $w={31} $h={15} />
            <Focused>
              <Svg w={29} h={23}>
                <path d="M4 3.500h17v16H4z" fill="#9dbfe4" stroke="#5b93c4" />
                <path d="M20.500 5v12" stroke="#000" />
                <path d="M1 5V1h4M24 1h4v4M28 18v4h-4M5 22H1v-4" stroke="#d0443c" strokeWidth="1.500" />
              </Svg>
            </Focused>
          </TermsShot>
          <ItemsShot>
            <SmallRow>
              <SmallLabel htmlFor="s-agr" $w={79}>Agreement</SmallLabel>
              <SmallField id="s-agr" $w={54} readOnly />
              <SmallLabel htmlFor="s-type" $w={78} $gap={3}>Agreement Type</SmallLabel>
              <SmallField id="s-type" $w={25} defaultValue="WK" />
              <SmallLabel htmlFor="s-date" $w={54} $gap={52}>Agmt Date</SmallLabel>
              <SmallField id="s-date" $w={55} defaultValue="09.01.2024" readOnly />
            </SmallRow>
            <SmallRow>
              <SmallLabel htmlFor="s-vend" $w={79}>Vendor</SmallLabel>
              <SmallField id="s-vend" $w={54} defaultValue="1000" readOnly />
              <Text $gap={3} $w={155}>C.E.B. BERLIN</Text>
              <SmallLabel htmlFor="s-cur" $w={54}>Currency</SmallLabel>
              <SmallField id="s-cur" $w={29} defaultValue="EUR" readOnly />
            </SmallRow>
            <SmallRow>Outline Agreement Items</SmallRow>
            <ItemsTable>
              <colgroup>{itemCols.map((w, i) => <col key={i} style={{ width: w }} />)}</colgroup>
              <thead>
                <tr>{itemHeads.map((h, i) => <ItemHead key={i} $first={i === 0}>{h}</ItemHead>)}</tr>
              </thead>
              <tbody>
                <tr>
                  {itemCells.map((c, i) => (
                    <ItemCell key={i} $first={i === 0} $mono={i === 1} $white={i === 10}>{c}</ItemCell>
                  ))}
                </tr>
              </tbody>
            </ItemsTable>
            <Marker $x={216} $y={7} $w={24} $h={13} />
            <Marker $x={40} $y={69} $w={22} $h={13} />
            <Marker $x={155} $y={70} $w={103} $h={13} />
            <Marker $x={494} $y={70} $w={35} $h={13} />
            <Pointer $x={41} $y={81}><Svg w={18} h={4}><path d="M1 2.500L17 1.500" strokeWidth="1.600" /></Svg></Pointer>
          </ItemsShot>
        </li>
        <li>
          <StepTitle $n={2} $top={25}>Create PO WRT Contract (ME21N)</StepTitle>
        </li>
      </Steps>
      <Pointer $x={498} $y={178}>
        <Svg w={9} h={15}><path d="M1 .5h2.500l1 1 1-1H8M4.500 1.500v12M1 14.500h2.500l1-1 1 1H8" strokeWidth="1.200" /></Svg>
      </Pointer>
      <Pointer $x={319} $y={268}>
        <Svg w={18} h={26}>
          <path d="M8 0l2.500 3h-5zM0 7l3-2.500v5zM16 7l-3-2.500v5zM3 7h2M11 7h2" fill="#111" strokeWidth=".6" />
          <path d="M8 8v13l3-3 3 6 2-1-3-6h4z" fill="#fff" stroke="#111" />
        </Svg>
      </Pointer>
    </Page>
  );
}

function WordStatus() {
  return (
    <StatusBar>
      <span>Page 1 of 2</span>
      <Name $gap={19}>44 words</Name>
      <IconButton $w={50} $h={20} aria-label="Proofing">
        <Svg w={12}><path d="M1 1.500h4l1 1 1-1h4.500V9M1 1.500V11h4.500M6 2.500V11.500M7.500 11l4-3" /></Svg>
      </IconButton>
      <span>English (United States)</span>
      <Stretch />
      <Svg w={15}><path d="M3.500 1H1v3M1 11v3h2.500M11.500 1H14v3M14 11v3h-2.500M4.500 3h4l2.500 2.500V12H4.500zM8 3v3h3" /></Svg>
      <Name $gap={2} $after={9}>Focus</Name>
      <IconButton $w={40} $h={20} aria-label="Read mode">
        <Svg w={12}><path d="M1 2h4.500l.5 1 .5-1H11v8.500H6.500l-.5 1-.5-1H1zM6 3v8M2.500 4.500H4.500M2.500 6.500H4.500M2.500 8.500H4.500M7.500 4.500H9.500M7.500 6.500H9.500M7.500 8.500H9.500" /></Svg>
      </IconButton>
      <IconButton $w={38} $h={20} $bg="#dcdfe2" aria-label="Print layout" $color="#222">
        <Svg w={11} h={13}><path d="M1 .5h9v12H1zM3 3h5M3 5h5M3 7h5M3 9h5" /></Svg>
      </IconButton>
      <IconButton $w={40} $h={20} aria-label="Web layout">
        <Svg w={14}><path d="M6 12.500H1V1h11v5M1 3.500h11M3 6h4M3 8.500h2" /><circle cx="9.500" cy="9.500" r="3.500" fill="#555" /><path d="M6 9.500h7M9.500 6v7" stroke="#ddd" /></Svg>
      </IconButton>
      <IconButton $w={15} $h={20} aria-label="Zoom out"><Svg w={6} h={6}><path d="M0 3.500h6" /></Svg></IconButton>
      <Zoom type="range" aria-label="Zoom" defaultValue={50} />
      <IconButton $w={16} $h={20} aria-label="Zoom in"><Svg w={7}><path d="M0 3.500h7M3.500 0v7" /></Svg></IconButton>
      <Name $gap={9}>100%</Name>
    </StatusBar>
  );
}

export default function App() {
  return (
    <>
      <GlobalStyle />
      <Screen>
        <SapPanel />
        <WordWindow>
          <WordTitle />
          <Tabs>
            {tabs.map((t, i) => (
              <Tab key={t} href="#" $first={i === 0} $on={t === "Home"}>{t}</Tab>
            ))}
            <Share>
              <Svg w={11} h={11}><path d="M3.500 3H1v7h8.500V7.500M3.500 7.500C3.500 5 5 4 7 4V1.500L10.500 5 7 8V6C5.500 6 4.500 6.300 3.500 7.500z" /></Svg>
              Share
              <Chevron w={6} />
            </Share>
          </Tabs>
          <WordRibbon />
          <Work>
            <WordDocument />
            <VScroll>
              <Arrow d="M4.500 1l4 6h-8z" />
              <VThumb />
              <Arrow d="M.5 2h8l-4 6z" />
            </VScroll>
          </Work>
          <HScroll>
            <Arrow d="M7 .5v8l-6-4z" />
            <HThumb />
            <Arrow d="M2 .5l6 4-6 4z" />
          </HScroll>
          <WordStatus />
        </WordWindow>
      </Screen>
    </>
  );
}
